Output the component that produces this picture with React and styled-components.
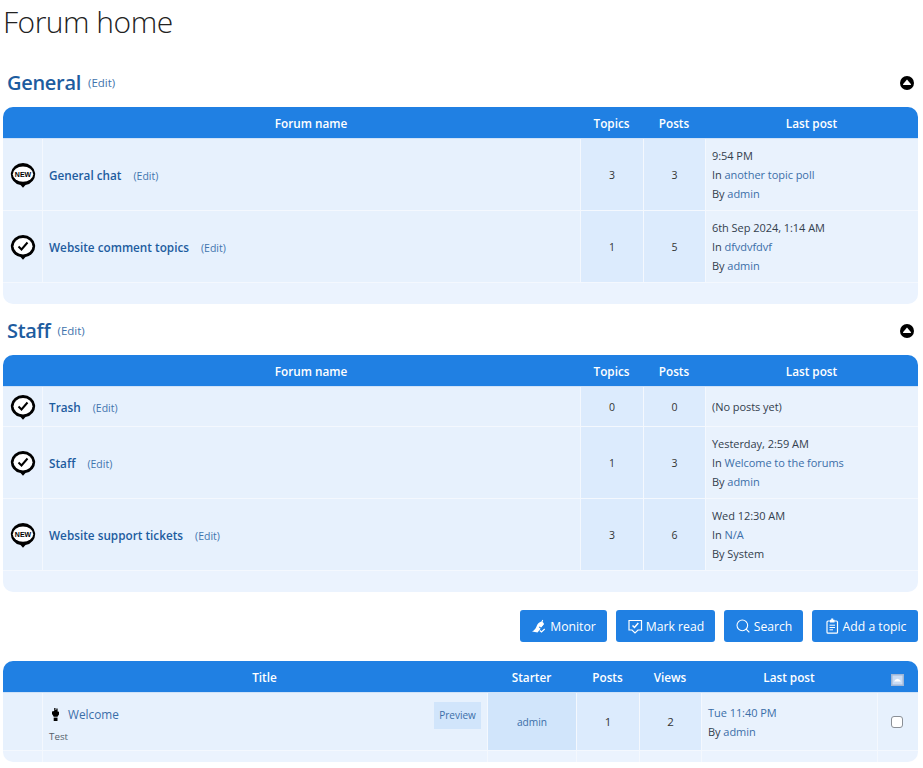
import React from 'react';
import styled, { createGlobalStyle } from 'styled-components';
import { Search } from 'lucide-react';

const GlobalStyle = createGlobalStyle`
  html, body {
    margin: 0;
    padding: 0;
    background: #fff;
    font-family: "Open Sans", "Noto Sans", sans-serif;
    font-size: 11px;
    color: #333;
  }
`;

const Page = styled.div`
  padding: 0 5px 6px 3px;
  overflow: hidden;
`;
const PageTitle = styled.h1`
  margin: 0;
  height: 69px;
  font-size: 30px;
  line-height: 43px;
  letter-spacing: -0.5px;
  font-weight: 300;
  color: #222;
`;
const CategoryHead = styled.div`
  display: flex;
  align-items: center;
  justify-content: space-between;
  box-sizing: border-box;
  height: 38px;
  padding: 0 4px 11px;
`;
const CategoryName = styled.h2`
  margin: 0;
  display: flex;
  align-items: center;
  gap: 7px;
  font-size: 20px;
  line-height: 27px;
  letter-spacing: -0.3px;
  font-weight: 600;
  color: #1d5c9f;
`;
const EditLink = styled.a`
  font-size: ${(p) => p.$size || 10.5}px;
  letter-spacing: 0;
  font-weight: 400;
  color: #3f74ad;
  margin-left: ${(p) => p.$gap || 0}px;
`;
const Table = styled.table`
  width: 100%;
  table-layout: fixed;
  border-collapse: separate;
  border-spacing: 0;
`;
const HeadCell = styled.th`
  height: 32px;
  box-sizing: border-box;
  padding: 0;
  background: #2080e3;
  color: #fff;
  font-size: 11.75px;
  font-weight: 600;
  text-align: center;
  vertical-align: middle;
  border-bottom: 1px solid #cfe2f8;
  &:first-child { border-top-left-radius: 10px; }
  &:last-child { border-top-right-radius: 10px; }
`;
const Cell = styled.td`
  height: ${(p) => p.$h || 72}px;
  padding: ${(p) => p.$pad || '0'};
  box-sizing: border-box;
  background: ${(p) => p.$bg || '#e7f1fd'};
  font-size: ${(p) => p.$size || 11}px;
  text-align: ${(p) => p.$align || 'left'};
  vertical-align: ${(p) => p.$valign || 'middle'};
  border-bottom: 1px solid #f4f8fe;
  border-left: 1px solid #f4f8fe;
  &:first-child { border-left: 0; text-align: center; }
`;
const FootCell = styled.td`
  height: ${(p) => p.$h || 21}px;
  padding: 0;
  background: #ebf3fe;
  border-left: ${(p) => (p.$divided ? '1px solid #f4f8fe' : '0')};
  &:first-child { border-left: 0; border-bottom-left-radius: 10px; }
  &:last-child { border-bottom-right-radius: 10px; }
`;
const ForumLink = styled.a`
  font-size: 11.75px;
  font-weight: 600;
  color: #1d5c9f;
`;
const PostLine = styled.div`
  line-height: 19px;
  letter-spacing: -0.05px;
  color: #33404d;
`;
const TextLink = styled.a`
  color: #3b6ea8;
`;
const IconWrap = styled.span`
  display: inline-flex;
  vertical-align: middle;
  margin-top: ${(p) => p.$drop || 0}px;
`;
const Spacer = styled.div`
  height: 13px;
`;
const Actions = styled.div`
  display: flex;
  justify-content: flex-end;
  gap: 9px;
  margin: 18px 0 19px;
`;
const ActionButton = styled.button`
  display: flex;
  align-items: center;
  justify-content: center;
  gap: 3px;
  width: ${(p) => p.$w}px;
  height: 32px;
  padding: 0;
  border: 0;
  border-radius: 3px;
  background: #2080e3;
  color: #fff;
  font-family: inherit;
  font-size: 12.2px;
`;
const TopicRow = styled.div`
  display: flex;
  align-items: flex-start;
  justify-content: space-between;
`;
const TopicInfo = styled.div`
  display: flex;
  flex-direction: column;
  gap: 7px;
  padding-top: 4px;
`;
const TopicName = styled.a`
  display: flex;
  align-items: center;
  gap: 9px;
  padding-left: 3px;
  font-size: 11.8px;
  line-height: 17px;
  color: #3b6ea8;
`;
const TopicDesc = styled.span`
  font-size: 9.8px;
  line-height: 14px;
  color: #555f6b;
`;
const PreviewChip = styled.span`
  box-sizing: border-box;
  width: 47px;
  height: 27px;
  background: #d1e5fb;
  color: #3b6ea8;
  font-size: 10px;
  line-height: 27px;
  text-align: center;
`;
const MarkBox = styled.input`
  appearance: none;
  box-sizing: border-box;
  width: 12px;
  height: 12px;
  margin: 0 2px 2px 0;
  border: 1.5px solid #8a8f96;
  border-radius: 3px;
  background: #fff;
  vertical-align: middle;
`;

const Bubble = ({ children }) => (
  <svg width="26" height="26" viewBox="0 0 26 26">
    <path d="M13 1a12.500 11.200 0 0 1 2.500 22.100L13 25.800l-2.500-2.700A12.500 11.200 0 0 1 13 1z" fill="#000" />
    {children}
  </svg>
);
const NewIcon = () => (
  <Bubble>
    <ellipse cx="13" cy="12.200" rx="10.200" ry="7.600" fill="#fff" />
    <text x="13" y="14.700" textAnchor="middle" fontFamily="Liberation Sans" fontWeight="700" fontSize="7" fill="#000">NEW</text>
  </Bubble>
);
const CheckIcon = () => (
  <Bubble>
    <ellipse cx="13" cy="12.200" rx="9.500" ry="8.200" fill="#fff" />
    <path d="M8.500 12.500l3 3 6-7" fill="none" stroke="#000" strokeWidth="2" />
  </Bubble>
);
const CollapseIcon = () => (
  <svg width="14" height="14" viewBox="0 0 14 14">
    <circle cx="7" cy="7" r="7" fill="#000" />
    <path d="M7 3.600l4 4.600q.3.800-.6.800H3.600q-.9 0-.6-.8z" fill="#fff" />
  </svg>
);
const MonitorIcon = () => (
  <svg width="16" height="16" viewBox="0 0 16 16">
    <path d="M1 13.500c2-1 3.500-2.500 4.500-5C6.300 6 8 4 10.500 3.500l.8-1.700.9.500-.7 1.700c1 .7 1.500 1.500 1.500 2.500L6.500 14.500C5 14 3 13.800 1 13.500z" fill="#fff" />
    <path d="M8.200 8.800l2 1.700 3.800-4.500" fill="none" stroke="#2080e3" strokeWidth="1.100" />
    <path d="M8.800 12.500l1.700 1.500 3.200-3" fill="none" stroke="#fff" strokeWidth="1.200" />
  </svg>
);
const MarkReadIcon = () => (
  <svg width="16" height="16" viewBox="0 0 16 16" fill="none" stroke="#fff">
    <path d="M2 2.500h12.500v9.500h-3.500l-3 3-3-3H2z" strokeWidth="1.200" />
    <path d="M5.500 7.500l2 2 3.800-4.500" strokeWidth="1.500" />
  </svg>
);
const TopicIcon = () => (
  <svg width="16" height="16" viewBox="0 0 16 16">
    <rect x="3" y="3" width="10.500" height="12.200" rx="1" fill="none" stroke="#fff" strokeWidth="1.200" />
    <path d="M6 1.800h1.200V.5h2v1.300h1.300v2.700H6z" fill="#fff" />
    <path d="M5.500 7.200h5.500M5.500 9.500h5.500M5.500 11.800h3.500" stroke="#fff" strokeWidth="1" />
  </svg>
);
const PinIcon = () => (
  <svg width="7" height="13" viewBox="0 0 7 13" fill="#000">
    <path d="M2.200 0h1.300v2h.8V.6h1.300v2.900L7 3.800v2.700L5.700 8.200v.6H1.500v-.6L0 6V3.600l2.200-.6z" />
    <path d="M1.700 9.600h3.800V13H1.700z" />
  </svg>
);
const SelectAllIcon = () => (
  <svg width="13" height="12" viewBox="0 0 13 12">
    <rect x=".75" y=".75" width="11.500" height="10.500" fill="#c9dcf5" stroke="#9fb6d6" strokeWidth="1.500" />
    <path d="M3 7.500q.8-2 3.500-2.700 2.700.7 3.500 2.700z" fill="#fff" />
  </svg>
);

const forumColumns = ['39px', undefined, '63px', '62px', '213px'];

const ForumTable = ({ rows }) => (
  <Table>
    <colgroup>
      {forumColumns.map((w, i) => <col key={i} style={w ? { width: w } : undefined} />)}
    </colgroup>
    <thead>
      <tr>
        <HeadCell />
        <HeadCell>Forum name</HeadCell>
        <HeadCell>Topics</HeadCell>
        <HeadCell>Posts</HeadCell>
        <HeadCell>Last post</HeadCell>
      </tr>
    </thead>
    <tbody>
      {rows.map((r) => (
        <tr key={r.name}>
          <Cell $h={r.height}><IconWrap>{r.fresh ? <NewIcon /> : <CheckIcon />}</IconWrap></Cell>
          <Cell $h={r.height} $pad="0 0 0 6px">
            <ForumLink>{r.name}</ForumLink>
            <EditLink $gap={12}>(Edit)</EditLink>
          </Cell>
          <Cell $h={r.height} $bg="#dcebfd" $align="center" $size={10.5}>{r.topics}</Cell>
          <Cell $h={r.height} $bg="#dcebfd" $align="center" $size={10.5}>{r.posts}</Cell>
          <Cell $h={r.height} $bg="#e9f2fd" $pad="0 0 0 6px">{r.last}</Cell>
        </tr>
      ))}
      <tr><FootCell colSpan={5} /></tr>
    </tbody>
  </Table>
);

const Last = ({ when, topic, by }) => (
  <>
    <PostLine>{when}</PostLine>
    <PostLine>In <TextLink>{topic}</TextLink></PostLine>
    <PostLine>By {by === 'System' ? by : <TextLink>{by}</TextLink>}</PostLine>
  </>
);

const generalRows = [
  { name: 'General chat', fresh: true, topics: 3, posts: 3, last: <Last when="9:54 PM" topic="another topic poll" by="admin" /> },
  { name: 'Website comment topics', topics: 1, posts: 5, last: <Last when="6th Sep 2024, 1:14 AM" topic="dfvdvfdvf" by="admin" /> },
];
const staffRows = [
  { name: 'Trash', height: 40, topics: 0, posts: 0, last: <PostLine>(No posts yet)</PostLine> },
  { name: 'Staff', topics: 1, posts: 3, last: <Last when="Yesterday, 2:59 AM" topic="Welcome to the forums" by="admin" /> },
  { name: 'Website support tickets', fresh: true, topics: 3, posts: 6, last: <Last when="Wed 12:30 AM" topic="N/A" by="System" /> },
];

const Category = ({ name, rows }) => (
  <>
    <CategoryHead>
      <CategoryName>{name} <EditLink $size={11.5}>(Edit)</EditLink></CategoryName>
      <IconWrap><CollapseIcon /></IconWrap>
    </CategoryHead>
    <ForumTable rows={rows} />
  </>
);

const topicColumns = ['39px', undefined, '89px', '63px', '62px', '176px', '41px'];

export default function App() {
  return (
    <Page>
      <GlobalStyle />
      <PageTitle>Forum home</PageTitle>
      <Category name="General" rows={generalRows} />
      <Spacer />
      <Category name="Staff" rows={staffRows} />
      <Actions>
        <ActionButton $w={87}><MonitorIcon />Monitor</ActionButton>
        <ActionButton $w={99}><MarkReadIcon />Mark read</ActionButton>
        <ActionButton $w={79}><Search size={16} strokeWidth={1.6} />Search</ActionButton>
        <ActionButton $w={106}><TopicIcon />Add a topic</ActionButton>
      </Actions>
      <Table>
        <colgroup>
          {topicColumns.map((w, i) => <col key={i} style={w ? { width: w } : undefined} />)}
        </colgroup>
        <thead>
          <tr>
            <HeadCell />
            <HeadCell>Title</HeadCell>
            <HeadCell>Starter</HeadCell>
            <HeadCell>Posts</HeadCell>
            <HeadCell>Views</HeadCell>
            <HeadCell>Last post</HeadCell>
            <HeadCell><IconWrap $drop={5}><SelectAllIcon /></IconWrap></HeadCell>
          </tr>
        </thead>
        <tbody>
          <tr>
            <Cell $h={58} />
            <Cell $h={58} $pad="9px 6px 0" $valign="top">
              <TopicRow>
                <TopicInfo>
                  <TopicName><PinIcon />Welcome</TopicName>
                  <TopicDesc>Test</TopicDesc>
                </TopicInfo>
                <PreviewChip>Preview</PreviewChip>
              </TopicRow>
            </Cell>
            <Cell $h={58} $bg="#d1e5fb" $align="center" $size={10.2}><TextLink>admin</TextLink></Cell>
            <Cell $h={58} $bg="#dcebfd" $align="center" $size={11.5}>1</Cell>
            <Cell $h={58} $bg="#dcebfd" $align="center" $size={11.5}>2</Cell>
            <Cell $h={58} $bg="#e9f2fd" $pad="0 0 0 6px">
              <PostLine><TextLink>Tue 11:40 PM</TextLink></PostLine>
              <PostLine>By <TextLink>admin</TextLink></PostLine>
            </Cell>
            <Cell $h={58} $align="center"><MarkBox type="checkbox" /></Cell>
          </tr>
          <tr>
            <FootCell $h={11} />
            <FootCell $h={11} $divided />
            <FootCell $h={11} $divided />
            <FootCell $h={11} $divided />
            <FootCell $h={11} $divided />
            <FootCell $h={11} $divided />
            <FootCell $h={11} $divided />
          </tr>
        </tbody>
      </Table>
    </Page>
  );
}
